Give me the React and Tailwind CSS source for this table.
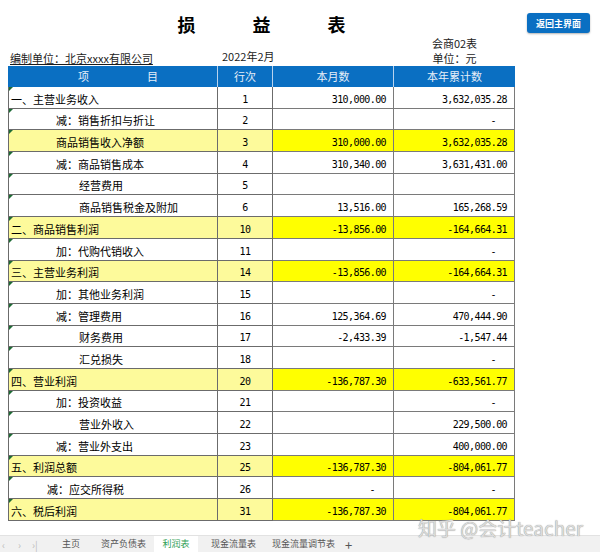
import React from 'react';

const rows = [
  { item: "一、主营业务收入", indent: 0, no: "1", month: "310,000.00", year: "3,632,035.28" },
  { item: "减：销售折扣与折让", indent: 45, no: "2", month: "", year: "-" },
  { item: "商品销售收入净额", indent: 45, no: "3", month: "310,000.00", year: "3,632,035.28", hl: true },
  { item: "减：商品销售成本", indent: 45, no: "4", month: "310,340.00", year: "3,631,431.00" },
  { item: "经营费用", indent: 68, no: "5", month: "", year: "" },
  { item: "商品销售税金及附加", indent: 68, no: "6", month: "13,516.00", year: "165,268.59" },
  { item: "二、商品销售利润", indent: 0, no: "10", month: "-13,856.00", year: "-164,664.31", hl: true },
  { item: "加：代购代销收入", indent: 45, no: "11", month: "", year: "-" },
  { item: "三、主营业务利润", indent: 0, no: "14", month: "-13,856.00", year: "-164,664.31", hl: true },
  { item: "加：其他业务利润", indent: 45, no: "15", month: "", year: "-" },
  { item: "减：管理费用", indent: 45, no: "16", month: "125,364.69", year: "470,444.90" },
  { item: "财务费用", indent: 68, no: "17", month: "-2,433.39", year: "-1,547.44" },
  { item: "汇兑损失", indent: 68, no: "18", month: "", year: "-" },
  { item: "四、营业利润", indent: 0, no: "20", month: "-136,787.30", year: "-633,561.77", hl: true },
  { item: "加：投资收益", indent: 45, no: "21", month: "", year: "-" },
  { item: "营业外收入", indent: 68, no: "22", month: "", year: "229,500.00" },
  { item: "减：营业外支出", indent: 45, no: "23", month: "", year: "400,000.00" },
  { item: "五、利润总额", indent: 0, no: "25", month: "-136,787.30", year: "-804,061.77", hl: true },
  { item: "减：应交所得税", indent: 36, no: "26", month: "-", year: "-" },
  { item: "六、税后利润", indent: 0, no: "31", month: "-136,787.30", year: "-804,061.77", hl: true },
];

const cjk = "font-['Noto_Sans_CJK_SC',sans-serif]";
const mono = "font-['DejaVu_Sans_Mono',monospace] text-[10px] tracking-[-0.6px]";

function NumCell({ value, hl }) {
  const isDash = value === "-";
  return (
    <div
      className={`h-full flex items-end justify-end border-r border-b border-[#7a7a7a] pb-[2px] leading-[12px] ${mono} ${
        isDash ? "pr-[18px]" : "pr-[7px]"
      } ${hl ? "bg-[#ffff00]" : "bg-white"}`}
    >
      {value}
    </div>
  );
}

export default function App() {
  return (
    <div className={`w-[600px] h-[552px] bg-white text-black overflow-hidden flex flex-col ${cjk}`}>
      {/* Header area */}
      <div className="flex pl-[8px]">
        <div className="w-[507px] flex flex-col">
          <div className="h-[36px] flex items-end justify-center gap-[57px] pb-[3px] text-[18px] font-bold leading-none">
            <span>损</span>
            <span>益</span>
            <span>表</span>
          </div>
          <div className="h-[30px] grid grid-cols-[210px_55px_121px_121px] items-end text-[11px] leading-[13px] text-[#1b1b1b]">
            <div className="pl-[2px] pb-[1px] underline underline-offset-1">编制单位：北京xxxx有限公司</div>
            <div className="pl-[4px] pb-[3px] whitespace-nowrap">2022年2月</div>
            <div />
            <div className="flex flex-col items-center leading-[15px]">
              <span>会商02表</span>
              <span>单位：元</span>
            </div>
          </div>
        </div>
        <div className="ml-[12px] pt-[13px] flex items-start">
          <button className="block w-[63px] h-[20px] rounded-[3px] bg-[#0a6fc2] text-white text-[9px] font-bold leading-none shadow-[0_1px_2px_rgba(0,0,0,0.3)]">
            返回主界面
          </button>
        </div>
      </div>

      {/* Table */}
      <div className="pl-[8px]">
        <div className="w-[507px]">
          <div className="h-[21px] grid grid-cols-[210px_55px_121px_121px] bg-[#0a6fc2] text-[#e6eef8] text-[11px]">
            <div className="flex items-center border-r border-[#b9d3ee] pl-[70px] gap-[58px]">
              <span>项</span>
              <span>目</span>
            </div>
            <div className="flex items-center justify-center border-r border-[#b9d3ee]">行次</div>
            <div className="flex items-center justify-center border-r border-[#b9d3ee]">本月数</div>
            <div className="flex items-center justify-center">本年累计数</div>
          </div>
          {rows.map((r) => (
            <div key={r.no} className="h-[21.7px] grid grid-cols-[210px_55px_121px_121px]">
              <div
                className={`relative h-full flex items-end border-l border-r border-b border-[#6b6b6b] pb-[2px] pl-[2px] text-[11px] leading-[13px] ${
                  r.hl ? "bg-[#fdfa9b]" : "bg-white"
                }`}
              >
                <span className="absolute left-0 top-0 w-0 h-0 border-t-[4px] border-r-[4px] border-t-[#1d6b34] border-r-transparent" />
                <span style={{ paddingLeft: r.indent }}>{r.item}</span>
              </div>
              <div
                className={`h-full flex items-end justify-center border-r border-b border-[#6b6b6b] pb-[2px] leading-[12px] ${mono} ${
                  r.hl ? "bg-[#fdfa9b]" : "bg-white"
                }`}
              >
                {r.no}
              </div>
              <NumCell value={r.month} hl={r.hl} />
              <NumCell value={r.year} hl={r.hl} />
            </div>
          ))}
        </div>
      </div>

      {/* Bottom area with sheet tabs */}
      <div className="relative flex-1 flex flex-col justify-end">
        <div className="absolute left-[418px] top-[-3px] text-[19px] leading-none text-[#dcdcdc] [text-shadow:0_0_1px_#7d7d7d] whitespace-nowrap">
          知乎 @会计teacher
        </div>
        <div className="h-[17px] flex items-stretch bg-[#f1f1f1] border-t border-[#e2e2e2] text-[9px] text-[#555] whitespace-nowrap">
          <div className="w-[62px] flex items-center text-[#bdbdbd] text-[10px]">
            <span className="pl-[2px]">‹</span>
            <span className="pl-[13px]">›</span>
            <span className="pl-[11px]">›|</span>
          </div>
          <div className="w-[39px] flex items-center">主页</div>
          <div className="w-[53px] flex items-center">资产负债表</div>
          <div className="w-[44px] flex items-center justify-center bg-white text-[#2f9e55]">利润表</div>
          <div className="w-[61px] ml-[13px] flex items-center">现金流量表</div>
          <div className="w-[73px] flex items-center">现金流量调节表</div>
          <div className="flex items-center text-[13px] leading-none">+</div>
        </div>
      </div>
    </div>
  );
}
